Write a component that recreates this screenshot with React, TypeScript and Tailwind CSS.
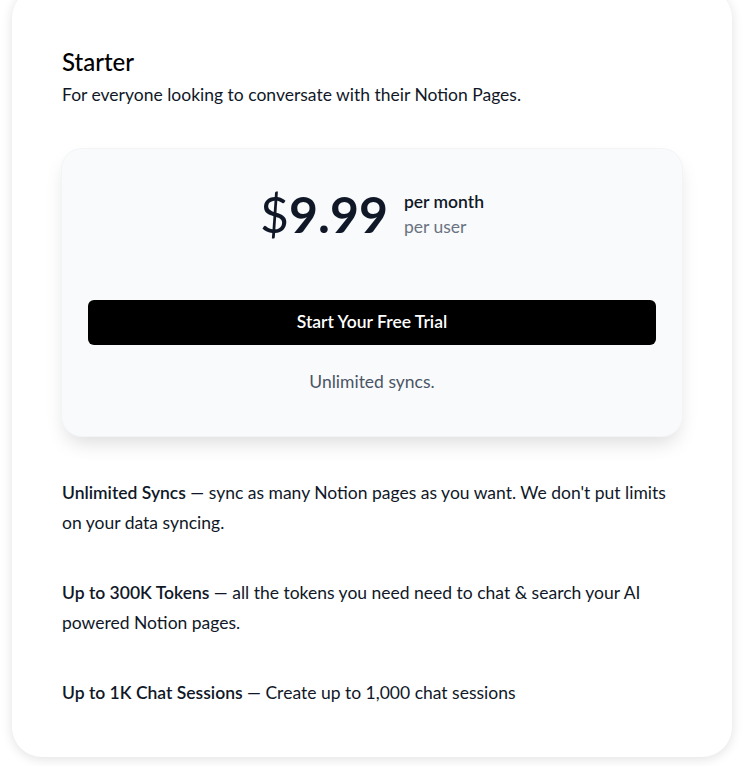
export default function App() {
  return (
    <div className="min-h-[766px] bg-white pb-[10px] pl-3 pr-[10px] pt-0" style={{ fontFamily: 'Lato, "Noto Sans", sans-serif' }}>
      <div className="-mt-[12px] rounded-[30px] bg-white px-[50px] pb-[49px] pt-[58px] shadow-[0_2px_12px_rgba(0,0,0,0.12)]">
        <h2 className="text-[24px] font-medium leading-8 text-black">Starter</h2>
        <p className="mt-[5px] text-[17.5px] leading-6 text-gray-900">For everyone looking to conversate with their Notion Pages.</p>

        <div className="mt-[42px] rounded-[20px] bg-[#f9fafb] px-[26px] pb-[41px] pt-[40px] shadow-[0_10px_20px_-4px_rgba(0,0,0,0.15)] ring-1 ring-gray-100">
          <div className="flex items-center justify-center gap-4">
            <div className="text-[50px] leading-none text-gray-900">
              <span className="font-normal">$</span>
              <span className="font-bold">9.99</span>
            </div>
            <div className="flex flex-col text-[17.5px] leading-[25px]">
              <span className="font-semibold text-gray-900">per month</span>
              <span className="text-gray-500">per user</span>
            </div>
          </div>
          <button className="mt-[61px] h-[45px] w-full rounded-md bg-black text-[17.5px] font-semibold text-white">
            Start Your Free Trial
          </button>
          <p className="mt-[24px] text-center text-[17.5px] text-gray-600">Unlimited syncs.</p>
        </div>

        <div className="mt-[42px] flex flex-col gap-[40px] text-[17.5px] leading-[30px] text-gray-900">
          <p>
            <span className="font-semibold">Unlimited Syncs</span> — sync as many Notion pages as you want. We don't put limits on your data syncing.
          </p>
          <p>
            <span className="font-semibold">Up to 300K Tokens</span> — all the tokens you need need to chat &amp; search your AI powered Notion pages.
          </p>
          <p>
            <span className="font-semibold">Up to 1K Chat Sessions</span> — Create up to 1,000 chat sessions
          </p>
        </div>
      </div>
    </div>
  )
}
